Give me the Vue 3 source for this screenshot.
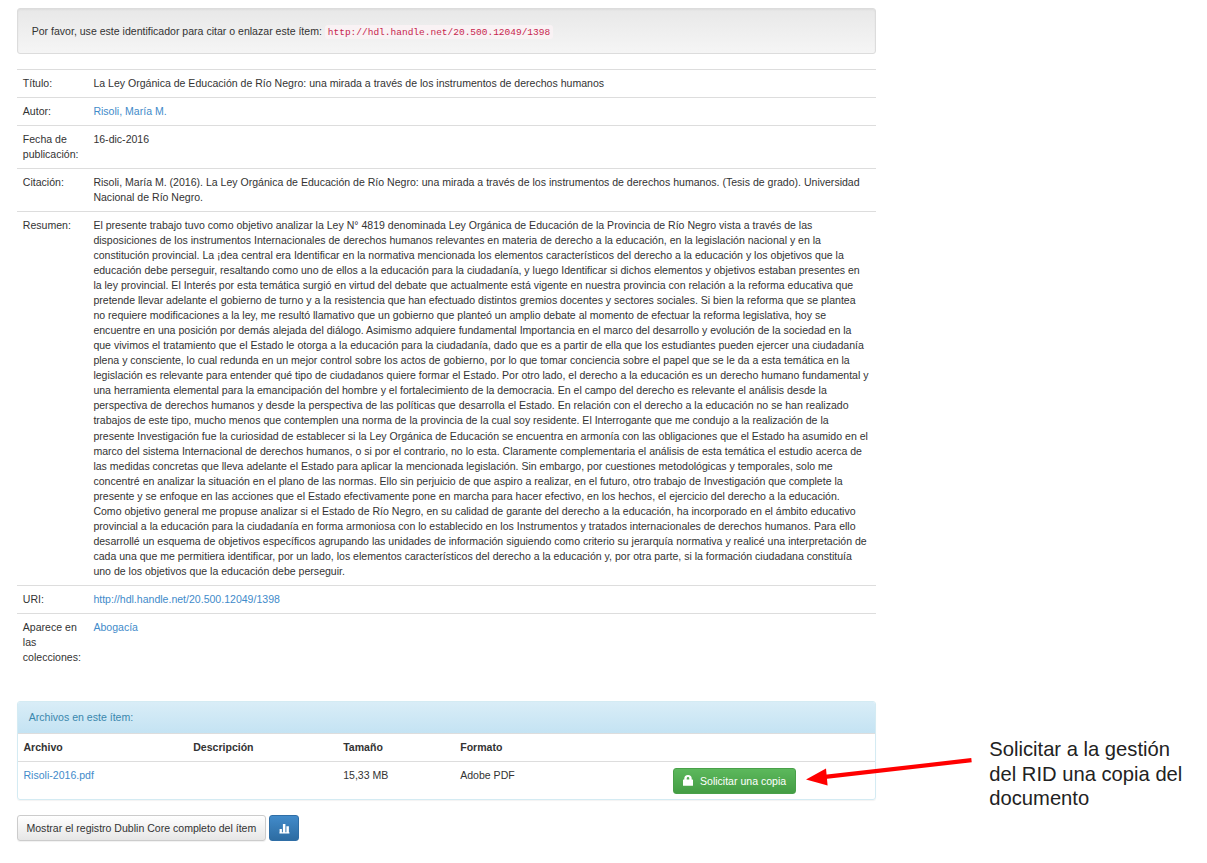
<script setup>
const abstractLines = [
  'El presente trabajo tuvo como objetivo analizar la Ley N° 4819 denominada Ley Orgánica de Educación de la Provincia de Río Negro vista a través de las',
  'disposiciones de los instrumentos Internacionales de derechos humanos relevantes en materia de derecho a la educación, en la legislación nacional y en la',
  'constitución provincial. La ¡dea central era Identificar en la normativa mencionada los elementos característicos del derecho a la educación y los objetivos que la',
  'educación debe perseguir, resaltando como uno de ellos a la educación para la ciudadanía, y luego Identificar si dichos elementos y objetivos estaban presentes en',
  'la ley provincial. El Interés por esta temática surgió en virtud del debate que actualmente está vigente en nuestra provincia con relación a la reforma educativa que',
  'pretende llevar adelante el gobierno de turno y a la resistencia que han efectuado distintos gremios docentes y sectores sociales. Si bien la reforma que se plantea',
  'no requiere modificaciones a la ley, me resultó llamativo que un gobierno que planteó un amplio debate al momento de efectuar la reforma legislativa, hoy se',
  'encuentre en una posición por demás alejada del diálogo. Asimismo adquiere fundamental Importancia en el marco del desarrollo y evolución de la sociedad en la',
  'que vivimos el tratamiento que el Estado le otorga a la educación para la ciudadanía, dado que es a partir de ella que los estudiantes pueden ejercer una ciudadanía',
  'plena y consciente, lo cual redunda en un mejor control sobre los actos de gobierno, por lo que tomar conciencia sobre el papel que se le da a esta temática en la',
  'legislación es relevante para entender qué tipo de ciudadanos quiere formar el Estado. Por otro lado, el derecho a la educación es un derecho humano fundamental y',
  'una herramienta elemental para la emancipación del hombre y el fortalecimiento de la democracia. En el campo del derecho es relevante el análisis desde la',
  'perspectiva de derechos humanos y desde la perspectiva de las políticas que desarrolla el Estado. En relación con el derecho a la educación no se han realizado',
  'trabajos de este tipo, mucho menos que contemplen una norma de la provincia de la cual soy residente. El Interrogante que me condujo a la realización de la',
  'presente Investigación fue la curiosidad de establecer si la Ley Orgánica de Educación se encuentra en armonía con las obligaciones que el Estado ha asumido en el',
  'marco del sistema Internacional de derechos humanos, o si por el contrario, no lo esta. Claramente complementaria el análisis de esta temática el estudio acerca de',
  'las medidas concretas que lleva adelante el Estado para aplicar la mencionada legislación. Sin embargo, por cuestiones metodológicas y temporales, solo me',
  'concentré en analizar la situación en el plano de las normas. Ello sin perjuicio de que aspiro a realizar, en el futuro, otro trabajo de Investigación que complete la',
  'presente y se enfoque en las acciones que el Estado efectivamente pone en marcha para hacer efectivo, en los hechos, el ejercicio del derecho a la educación.',
  'Como objetivo general me propuse analizar si el Estado de Río Negro, en su calidad de garante del derecho a la educación, ha incorporado en el ámbito educativo',
  'provincial a la educación para la ciudadanía en forma armoniosa con lo establecido en los Instrumentos y tratados internacionales de derechos humanos. Para ello',
  'desarrollé un esquema de objetivos específicos agrupando las unidades de información siguiendo como criterio su jerarquía normativa y realicé una interpretación de',
  'cada una que me permitiera identificar, por un lado, los elementos característicos del derecho a la educación y, por otra parte, si la formación ciudadana constituía',
  'uno de los objetivos que la educación debe perseguir.',
]

const fields = [
  { label: ['Título:'], lines: ['La Ley Orgánica de Educación de Río Negro: una mirada a través de los instrumentos de derechos humanos'] },
  { label: ['Autor:'], lines: ['Risoli, María M.'], link: true },
  { label: ['Fecha de', 'publicación:'], lines: ['16-dic-2016'] },
  {
    label: ['Citación:'],
    lines: [
      'Risoli, María M. (2016). La Ley Orgánica de Educación de Río Negro: una mirada a través de los instrumentos de derechos humanos. (Tesis de grado). Universidad',
      'Nacional de Río Negro.',
    ],
  },
  { label: ['Resumen:'], lines: abstractLines },
  { label: ['URI:'], lines: ['http://hdl.handle.net/20.500.12049/1398'], link: true },
  { label: ['Aparece en', 'las', 'colecciones:'], lines: ['Abogacía'], link: true },
]
</script>

<template>
  <div class="page">
    <main class="content">
      <div class="well">
        Por favor, use este identificador para citar o enlazar este ítem:
        <code>http://hdl.handle.net/20.500.12049/1398</code>
      </div>

      <div class="record">
        <div v-for="field in fields" :key="field.label[0]" class="row">
          <div class="label">
            <span v-for="part in field.label" :key="part" class="line">{{ part }}</span>
          </div>
          <div class="value">
            <a v-if="field.link" class="link">{{ field.lines[0] }}</a>
            <template v-else>
              <span v-for="(line, i) in field.lines" :key="i" class="line">{{ line }}</span>
            </template>
          </div>
        </div>
      </div>

      <section class="panel">
        <div class="panel-heading">Archivos en este ítem:</div>
        <div class="files head">
          <div>Archivo</div>
          <div>Descripción</div>
          <div>Tamaño</div>
          <div>Formato</div>
          <div></div>
        </div>
        <div class="files body">
          <div><a class="link">Risoli-2016.pdf</a></div>
          <div></div>
          <div>15,33 MB</div>
          <div>Adobe PDF</div>
          <div>
            <button class="btn success">
              <svg class="lock" viewBox="0 0 10 11">
                <path fill="#fff" fill-rule="evenodd" d="M.4 4.6H1.3V3.6A3.7 3.5 0 0 1 8.7 3.6V4.6H9.6Q10 4.6 10 5V10.4Q10 10.8 9.6 10.8H.4Q0 10.8 0 10.4V5Q0 4.6.4 4.6ZM3.7 4.4H6.3V3.4A1.3 1.3 0 0 0 3.7 3.4Z" />
              </svg>
              <span>Solicitar una copia</span>
            </button>
          </div>
        </div>
      </section>

      <div class="actions">
        <button class="btn default">Mostrar el registro Dublin Core completo del ítem</button>
        <button class="btn primary">
          <svg class="stats" viewBox="0 0 11 11">
            <path fill="#fff" d="M.6 6H2.9V10H.6ZM3.9 1H6.4V10H3.9ZM7.4 3.2H9.9V10H7.4ZM.4 9.3H10.4V10.4H.4Z" />
          </svg>
        </button>
      </div>
    </main>

    <svg class="arrow" viewBox="0 0 168 22">
      <path d="M165.5 2.2 19 18.9" stroke="#f00" stroke-width="4.2" />
      <path d="M0 21.4 20 10.4 21.6 27.6Z" fill="#f00" />
    </svg>
    <p class="note">
      <span class="line">Solicitar a la gestión</span>
      <span class="line">del RID una copia del</span>
      <span class="line">documento</span>
    </p>
  </div>
</template>

<style>
body {
  margin: 0;
  background: #fff;
}
</style>

<style scoped>
.page {
  position: relative;
  box-sizing: border-box;
  width: 1207px;
  height: 863px;
  padding: 8.3px 0 0 16.5px;
  overflow: hidden;
  font: 10.563px/15.06px "Liberation Sans", Arial, sans-serif;
  color: #333;
}

.content {
  width: 859.5px;
}

.well {
  box-sizing: border-box;
  height: 45.6px;
  padding: 14.8px 14.2px 0;
  border: 1px solid #dcdcdc;
  border-radius: 3px;
  background: linear-gradient(#e8e8e8, #f5f5f5);
  box-shadow: inset 0 1px 2px rgba(0, 0, 0, 0.05);
  white-space: nowrap;
}

code {
  position: relative;
  top: -1px;
  padding: 1.5px 3px;
  border-radius: 3px;
  background: #f9f2f4;
  font: 9.51px "Liberation Mono", monospace;
  color: #c7254e;
}

.record {
  height: 616.9px;
  margin-top: 15.4px;
}

.row {
  display: grid;
  grid-template-columns: 70.6px 1fr;
  padding: 5.9px 6px 5.9px 6.3px;
  border-top: 1px solid #ddd;
}

.line {
  display: block;
  white-space: nowrap;
}

.link {
  color: #428bca;
}

.panel {
  box-sizing: border-box;
  height: 98.8px;
  margin-top: 15.1px;
  border: 1px solid #d4ebf3;
  border-radius: 3px;
  box-shadow: 0 1px 1px rgba(0, 0, 0, 0.05);
  overflow: hidden;
}

.panel-heading {
  height: 15.2px;
  padding: 8px 11.3px;
  background: linear-gradient(#d9edf7, #c4e3f3);
  color: #3a87ad;
}

.files {
  display: grid;
  grid-template-columns: 169.7px 150px 117px 213px 1fr;
  padding: 5.9px 0 5.9px 6px;
  border-top: 1px solid #ddd;
}

.head {
  font-weight: bold;
}

.btn {
  box-sizing: border-box;
  display: flex;
  align-items: center;
  justify-content: center;
  height: 26px;
  margin: 0;
  padding: 0;
  border: 1px solid;
  border-radius: 3px;
  font: inherit;
  white-space: nowrap;
}

.success {
  width: 123.3px;
  gap: 6.5px;
  border-color: #49a049;
  background: linear-gradient(#5cb85c, #449d44);
  color: #fff;
}

.lock {
  width: 10px;
  height: 11px;
  margin-top: -2px;
}

.actions {
  display: flex;
  gap: 3px;
  margin-top: 15px;
}

.default {
  width: 249.7px;
  border-color: #ccc;
  background: linear-gradient(#fff, #e6e6e6);
  box-shadow: 0 1px 1px rgba(0, 0, 0, 0.06);
  color: #333;
}

.primary {
  width: 30.2px;
  border-color: #2f6ea6;
  background: linear-gradient(#428bca, #2d6ca2);
}

.stats {
  width: 11px;
  height: 11px;
}

.arrow {
  position: absolute;
  left: 806px;
  top: 758px;
  width: 168px;
  height: 22px;
  overflow: visible;
}

.note {
  position: absolute;
  left: 989.3px;
  top: 737px;
  margin: 0;
  font-size: 20.2px;
  line-height: 24.5px;
  color: #222;
}
</style>
